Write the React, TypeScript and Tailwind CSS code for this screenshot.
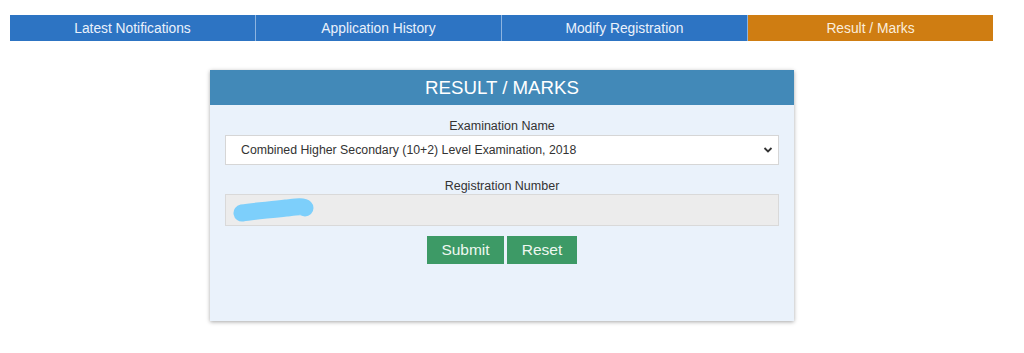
import React, { useState } from 'react';

const tabs = ['Latest Notifications', 'Application History', 'Modify Registration', 'Result / Marks'];

export default function App() {
  const [active] = useState(3);
  const [exam, setExam] = useState('chsl2018');

  return (
    <div className="w-[1024px] h-[353px] bg-white overflow-hidden" style={{ fontFamily: '"Liberation Sans", Arial, sans-serif' }}>
      {/* Top tabs */}
      <div className="pt-[15px] pl-[10px] pr-[31px] flex">
        {tabs.map((t, i) => (
          <div
            key={t}
            className={`flex-1 h-[26px] pt-[2px] flex items-center justify-center text-[13.8px] text-[#eaf1fb] ${
              i === active ? 'bg-[#cf7d12] text-[#fbeedd]' : 'bg-[#2d74c3]'
            } ${i > 0 ? 'border-l border-[#8db4e0]' : ''}`}
          >
            {t}
          </div>
        ))}
      </div>

      {/* Result card */}
      <div className="mt-[29px] ml-[210px] w-[584px] h-[251px] bg-[#eaf2fb] shadow-[0_1px_4px_rgba(0,0,0,0.35)]">
        <div className="h-[35px] bg-[#4289b8] flex items-center justify-center text-white text-[18.7px] pt-[2px]">
          RESULT / MARKS
        </div>

        <div className="px-[15px] pt-[14px]">
          <div className="text-center text-[12.5px] text-[#333] leading-[14px]">Examination Name</div>
          <div className="relative mt-[2px]">
            <select
              value={exam}
              onChange={e => setExam(e.target.value)}
              className="appearance-none w-full h-[30px] bg-white border border-[#d6d6d6] pl-[15px] text-[12.3px] text-[#333] outline-none"
            >
              <option value="chsl2018">Combined Higher Secondary (10+2) Level Examination, 2018</option>
            </select>
            <svg className="absolute right-[6px] top-[11px]" width="10" height="8" viewBox="0 0 10 8">
              <path d="M1.5 2 L5 5.5 L8.5 2" fill="none" stroke="#333" strokeWidth="1.8" />
            </svg>
          </div>

          <div className="mt-[14px] text-center text-[12.5px] text-[#333] leading-[14px]">Registration Number</div>
          <div className="relative mt-[1px]">
            <input
              readOnly
              className="w-full h-[32px] bg-[#ececec] border border-[#d9d9d9] outline-none"
            />
            <svg className="absolute left-[5px] top-[4px]" width="86" height="26" viewBox="0 0 86 26">
              <path
                d="M12 15 C24 13 40 12 56 10 C66 9 73 8 75 10"
                fill="none"
                stroke="#7dcffb"
                strokeWidth="17"
                strokeLinecap="round"
              />
            </svg>
          </div>

          <div className="mt-[10px] flex justify-center gap-[3px]">
            <button className="w-[77px] h-[28px] bg-[#3d9a66] text-[#eef7f0] text-[15.5px]">Submit</button>
            <button className="w-[70px] h-[28px] bg-[#3d9a66] text-[#eef7f0] text-[15.5px]">Reset</button>
          </div>
        </div>
      </div>
    </div>
  );
}
